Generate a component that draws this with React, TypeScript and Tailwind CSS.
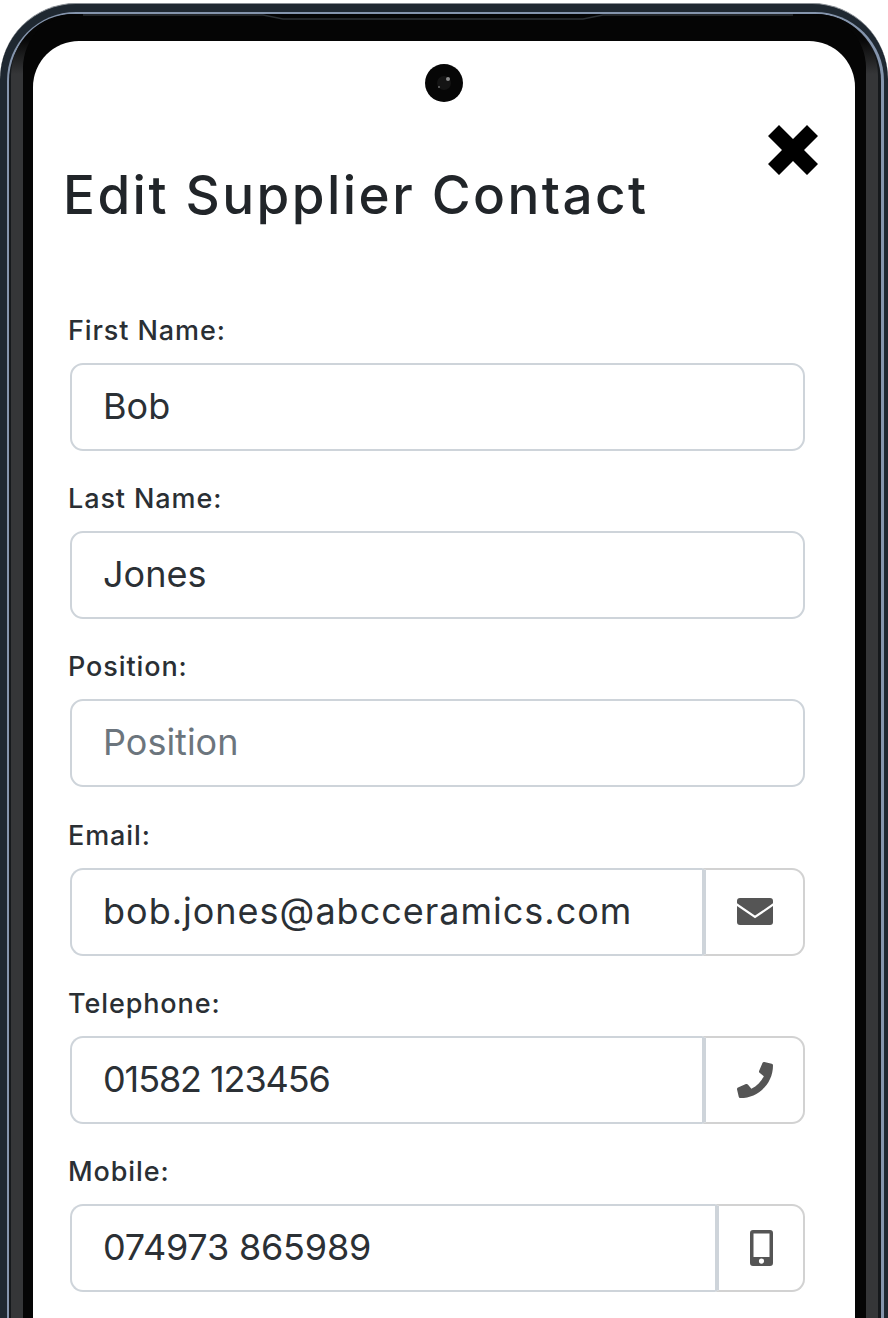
import React from "react";
import { FaPhone } from "react-icons/fa";

function MobileIcon() {
  return (
    <svg width="23" height="36" viewBox="0 0 23 36" aria-hidden="true">
      <path fillRule="evenodd" fill="#555555" d="M3 0h17a3 3 0 0 1 3 3v30a3 3 0 0 1-3 3H3a3 3 0 0 1-3-3V3a3 3 0 0 1 3-3zM3.500 3.500v23.500h16V3.500zM11.500 28.500a2.600 2.600 0 1 0 0 5.200a2.600 2.600 0 0 0 0-5.200z" />
    </svg>
  );
}

function EnvelopeIcon() {
  return (
    <svg width="36" height="27" viewBox="0 0 36 27" aria-hidden="true">
      <rect x="0" y="0" width="36" height="27" rx="3" fill="#555555" />
      <path d="M-1 6L18 19L37 6" fill="none" stroke="#ffffff" strokeWidth="2.200" />
    </svg>
  );
}

type FieldProps = {
  label: string;
  value?: string;
  placeholder?: string;
  icon?: React.ReactNode;
  addonClass?: string;
  trackClass?: string;
};

function Field({ label, value, placeholder, icon, addonClass, trackClass }: FieldProps) {
  return (
    <div className="flex flex-col">
      <label className="mb-[15px] h-[34px] pl-[4px] text-[27px] leading-[34px] font-medium tracking-[0.9px] text-[#2a2f34]">{label}</label>
      <div className="ml-[6px] flex h-[88px] w-[735px]">
        <input
          readOnly
          defaultValue={value}
          placeholder={placeholder}
          className={
            "h-full min-w-0 flex-1 border-[2.5px] border-[#ced4da] bg-white pb-[2px] pl-[31px] text-[36px] text-[#2b3035] outline-none placeholder:text-[#6c757d] " +
            (trackClass ?? "") +
            " " +
            (icon ? "rounded-l-[13px] border-r-0" : "rounded-[13px]")
          }
        />
        {icon ? (
          <div className={"flex h-full shrink-0 items-center justify-center rounded-r-[13px] border-[2.5px] border-l-[4px] border-[#d2d2d2] border-l-[#ced4da] bg-white " + addonClass}>
            {icon}
          </div>
        ) : null}
      </div>
    </div>
  );
}

export default function App() {
  return (
    <div className="h-[1318px] w-[888px] overflow-hidden bg-white pt-[3px] font-['Inter',sans-serif]">
      <div className="relative h-full rounded-t-[76px] border-t border-t-[#8b9096] bg-[#1f2831] pt-[8px] pr-[4px] pl-[7px]">
        <div className="h-full rounded-t-[69px] border-t-2 border-r-[3px] border-l-2 border-[#8595ad] bg-[#15181b] pr-[3px] pl-[2px]">
          <div className="h-full rounded-t-[62px] bg-[linear-gradient(to_bottom,#060606_0px,#060606_25px,#353638_60px,#353638_100%)] px-[12px]">
            <div className="h-full rounded-t-[54px] bg-[#050505] pt-[27px] pr-[11px] pl-[10px]">
              <div className="relative h-full rounded-t-[46px] bg-white">
                {/* camera */}
                <div className="absolute top-[23px] left-[392px] flex h-[38px] w-[38px] items-center justify-center rounded-full bg-[#060606]">
                  <div className="relative h-[14px] w-[14px] rounded-full bg-[#141414]">
                    <div className="absolute top-[1px] right-[1px] h-[4px] w-[4px] rounded-full bg-[#8a8a8a]" />
                    <div className="absolute bottom-[2px] left-[1px] h-[2px] w-[2px] rounded-full bg-[#6a6a6a]" />
                  </div>
                </div>
                {/* close */}
                <svg className="absolute top-[84px] left-[735px]" width="50" height="50" viewBox="0 0 50 50" aria-hidden="true">
                  <polygon fill="#000000" points="11,0 25,14 39,0 50,11 36,25 50,39 39,50 25,36 11,50 0,39 14,25 0,11" />
                </svg>
                <div className="pt-[122px]">
                  <h1 className="mb-[87px] h-[64px] pl-[30px] text-[53px] leading-[64px] font-medium tracking-[2.45px] whitespace-nowrap text-[#212529]">Edit Supplier Contact</h1>
                  <div className="flex flex-col gap-[31.2px] pl-[31px]">
                    <Field label="First Name:" value="Bob" />
                    <Field label="Last Name:" value="Jones" />
                    <Field label="Position:" placeholder="Position" />
                    <Field label="Email:" value="bob.jones@abcceramics.com" trackClass="tracking-[1px]" icon={<EnvelopeIcon />} addonClass="w-[103px]" />
                    <Field label="Telephone:" value="01582 123456" trackClass="tracking-[-1.1px]" icon={<FaPhone size={36} color="#555555" />} addonClass="w-[103px]" />
                    <Field label="Mobile:" value="074973 865989" trackClass="tracking-[-0.2px]" icon={<MobileIcon />} addonClass="w-[90px]" />
                  </div>
                </div>
              </div>
            </div>
          </div>
        </div>
        <svg className="absolute top-0 left-[-7px]" width="888" height="24" viewBox="0 0 888 24" aria-hidden="true">
          <path d="M90 11H270L290 15H590L610 11H800" fill="none" stroke="#2c3034" strokeWidth="1.500" />
        </svg>
      </div>
    </div>
  );
}
